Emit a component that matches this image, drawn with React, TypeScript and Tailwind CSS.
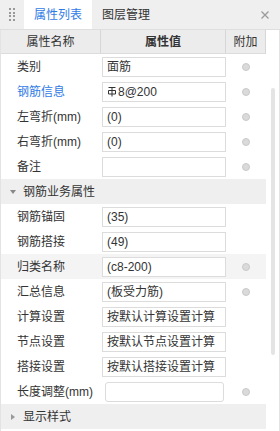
import React from "react";

type Row = {
  label: string;
  value?: string;
  blue?: boolean;
  radio?: boolean;
  steel?: boolean;
  hover?: boolean;
  rounded?: boolean;
};

const basicRows: Row[] = [
  { label: "类别", value: "面筋", radio: true },
  { label: "钢筋信息", value: "8@200", blue: true, radio: true, steel: true },
  { label: "左弯折(mm)", value: "(0)", radio: true },
  { label: "右弯折(mm)", value: "(0)", radio: true },
  { label: "备注", value: "", radio: true },
];

const bizRows: Row[] = [
  { label: "钢筋锚固", value: "(35)" },
  { label: "钢筋搭接", value: "(49)" },
  { label: "归类名称", value: "(c8-200)", radio: true, hover: true },
  { label: "汇总信息", value: "(板受力筋)", radio: true },
  { label: "计算设置", value: "按默认计算设置计算" },
  { label: "节点设置", value: "按默认节点设置计算" },
  { label: "搭接设置", value: "按默认搭接设置计算" },
  { label: "长度调整(mm)", value: "", radio: true, rounded: true },
];

function SteelMark() {
  return (
    <svg width="10" height="11" viewBox="0 0 10 11" className="mr-[1px] shrink-0">
      <path d="M1.5 1.5H8.5M5 1.5V10.5M1.5 4.5H8.5V8H1.5Z" fill="none" stroke="#333" strokeWidth="1" />
    </svg>
  );
}

function PropRow({ row }: { row: Row }) {
  return (
    <div className={`flex h-[25px] items-center ${row.hover ? "bg-[#f4f4f4]" : ""}`}>
      <div className={`w-[101px] shrink-0 pl-4 text-[12px] ${row.blue ? "text-[#2f7be6]" : "text-[#333]"}`}>
        {row.label}
      </div>
      <div
        className={`flex h-[20px] shrink-0 items-center overflow-hidden whitespace-nowrap border border-[#dcdcdc] bg-white pl-[4px] text-[12px] text-[#333] ${
          row.rounded ? "ml-[3px] mr-[2px] w-[119px] rounded-[3px]" : "w-[124px]"
        }`}
      >
        {row.steel && <SteelMark />}
        {row.value}
      </div>
      <div className="flex w-[41px] shrink-0 justify-center">
        {row.radio && <span className="ml-[-2px] h-[8px] w-[8px] rounded-full border border-[#c9c9c9] bg-[#dadada]" />}
      </div>
    </div>
  );
}

function Section({ title, open }: { title: string; open: boolean }) {
  return (
    <div className="flex h-[25px] items-center bg-[#efefef] text-[12px] text-[#333]">
      {open ? (
        <span className="ml-[9px] mr-[7px] h-0 w-0 border-x-[3px] border-t-[4px] border-x-transparent border-t-[#888]" />
      ) : (
        <span className="ml-[10px] mr-[8px] h-0 w-0 border-y-[3px] border-l-[4px] border-y-transparent border-l-[#999]" />
      )}
      {title}
    </div>
  );
}

export default function App() {
  return (
    <div
      className="relative h-[431px] w-[280px] overflow-hidden bg-white"
      style={{ fontFamily: '"Liberation Sans", "Noto Sans CJK SC", sans-serif' }}
    >
      {/* Tab bar */}
      <div className="flex h-[30px] items-stretch border-b border-[#dedede] bg-[#efefef] text-[12px]">
        <div className="grid w-[24px] place-items-center">
          <div className="grid grid-cols-2 gap-x-[2px] gap-y-[1.5px]">
            {Array.from({ length: 8 }).map((_, i) => (
              <span key={i} className="h-[2px] w-[2px] bg-[#999]" />
            ))}
          </div>
        </div>
        <div className="flex w-[68px] items-center justify-center bg-white text-[#2f7be6]">属性列表</div>
        <div className="flex items-center pl-[10px] text-[#333]">图层管理</div>
        <div className="ml-auto mr-[10px] flex items-center">
          <svg width="10" height="10" viewBox="0 0 10 10">
            <path d="M1.5 1.5L8.5 8.5M8.5 1.5L1.5 8.5" stroke="#9a9a9a" strokeWidth="1.3" />
          </svg>
        </div>
      </div>

      {/* Body */}
      <div className="flex h-[401px] border-l border-r border-[#e3e3e3]">
        <div className="w-[265px] shrink-0">
          <div className="flex h-[24px] border-b border-[#dcdcdc] bg-[#ececec] text-[12px] text-[#333]">
            <div className="flex w-[100px] items-center justify-center border-r border-[#d6d6d6]">属性名称</div>
            <div className="flex w-[125px] items-center justify-center border-r border-[#d6d6d6] font-bold">属性值</div>
            <div className="flex w-[40px] items-center justify-center border-r border-[#d6d6d6]">附加</div>
          </div>
          {basicRows.map((r) => (
            <PropRow key={r.label} row={r} />
          ))}
          <Section title="钢筋业务属性" open />
          {bizRows.map((r) => (
            <PropRow key={r.label} row={r} />
          ))}
          <Section title="显示样式" open={false} />
        </div>
        <div className="flex flex-1 justify-center pt-[58px]">
          <div className="h-[267px] w-[4px] rounded-full bg-[#e4e4e4]" />
        </div>
      </div>
    </div>
  );
}
